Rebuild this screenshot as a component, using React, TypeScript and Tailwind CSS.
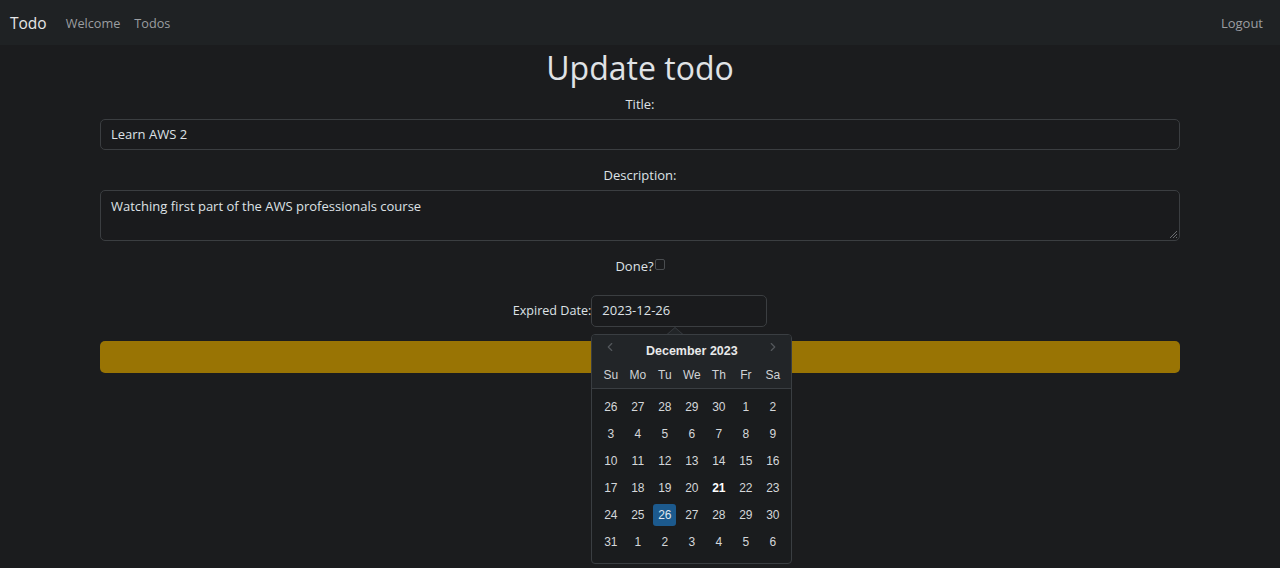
import { ChevronLeft, ChevronRight } from 'lucide-react';

const weekdays = ['Su', 'Mo', 'Tu', 'We', 'Th', 'Fr', 'Sa'];

const weeks = [
  [26, 27, 28, 29, 30, 1, 2],
  [3, 4, 5, 6, 7, 8, 9],
  [10, 11, 12, 13, 14, 15, 16],
  [17, 18, 19, 20, 21, 22, 23],
  [24, 25, 26, 27, 28, 29, 30],
  [31, 1, 2, 3, 4, 5, 6],
];

function DatePicker() {
  return (
    <div className="absolute left-0 top-[39px] z-10 w-[201px] font-['Liberation_Sans',Arial,sans-serif]">
      <div className="absolute left-[76px] top-[-7px] h-0 w-0 border-x-[8px] border-b-[7px] border-x-transparent border-b-[#3a3e42]" />
      <div className="absolute left-[77px] top-[-6px] h-0 w-0 border-x-[7px] border-b-[6px] border-x-transparent border-b-[#222528]" />
      <div className="overflow-hidden rounded-[4px] border border-[#3a3e42] bg-[#1a1c1e]">
        <div className="border-b border-[#3a3e42] bg-[#222528] px-[5px] pt-[4px] pb-[2px]">
          <div className="relative flex h-[25px] items-center justify-center">
            <ChevronLeft size={14} strokeWidth={2} className="absolute left-[6px] top-[1px] text-[#54585c]" />
            <span className="text-[12.5px] font-bold text-[#e8e9ea]">December 2023</span>
            <ChevronRight size={14} strokeWidth={2} className="absolute right-[6px] top-[1px] text-[#54585c]" />
          </div>
          <div className="grid grid-cols-7">
            {weekdays.map((d) => (
              <div key={d} className="flex h-[22px] items-center justify-center text-[12px] text-[#d0d3d6]">{d}</div>
            ))}
          </div>
        </div>
        <div className="px-[5px] pt-[4px] pb-[8px]">
          {weeks.map((w, i) => (
            <div key={i} className="grid grid-cols-7">
              {w.map((d, j) => {
                const selected = i === 4 && d === 26;
                const today = i === 3 && d === 21;
                return (
                  <div key={j} className="flex h-[27px] items-center justify-center">
                    <span className={`flex h-[22px] w-[23px] items-center justify-center rounded-[3px] text-[12px] ${selected ? 'bg-[#1c5a8e] text-[#dfe6ee]' : today ? 'font-bold text-white' : 'text-[#d4d7da]'}`}>
                      {d}
                    </span>
                  </div>
                );
              })}
            </div>
          ))}
        </div>
      </div>
    </div>
  );
}

export default function App() {
  return (
    <div className="min-h-[568px] bg-[#1b1c1e] font-['Open_Sans','Noto_Sans',sans-serif] text-[#dee2e6]">
      <nav className="flex h-[45px] items-center bg-[#1f2224] px-[10px] pt-[2px]">
        <a className="mr-[19px] text-[15.5px] text-[#e6e7e8]">Todo</a>
        <a className="mr-[14px] text-[12.7px] text-[#9b9ea1]">Welcome</a>
        <a className="text-[12.7px] text-[#9b9ea1]">Todos</a>
        <a className="ml-auto mr-[7px] text-[13px] text-[#9b9ea1]">Logout</a>
      </nav>

      <div className="mx-auto w-[1080px] text-center text-[13px]">
        <h1 className="mt-[1px] text-[32px] leading-[44px] text-[#e0e3e6]">Update todo</h1>

        <div className="mt-[4px] leading-[20px]">Title:</div>
        <div className="mt-[5px] flex h-[31px] items-center rounded-[5px] border border-[#3b3e41] bg-[#1a1b1d] px-[10px] text-left">
          Learn AWS 2
        </div>

        <div className="mt-[15px] leading-[20px]">Description:</div>
        <div className="relative mt-[5px] h-[51px] rounded-[5px] border border-[#3b3e41] bg-[#1a1b1d] px-[10px] pt-[6px] text-left">
          Watching first part of the AWS professionals course
          <svg className="absolute right-[1px] bottom-[1px]" width="10" height="10" viewBox="0 0 10 10">
            <path d="M9 2L2 9M9 5L5 9M9 8L8 9" stroke="#6a6d70" strokeWidth="1" />
          </svg>
        </div>

        <div className="mt-[15px] flex h-[20px] items-center justify-center leading-[20px]">
          <span>Done?</span>
          <span className="ml-[1px] mb-[3px] inline-block h-[11px] w-[10px] rounded-[2px] border border-[#4a4d50] bg-[#1a1b1d]" />
        </div>

        <div className="mt-[19px] flex items-center justify-center">
          <span className="text-[12.6px]">Expired Date:</span>
          <div className="relative">
            <div className="flex h-[32px] w-[176px] items-center rounded-[5px] border border-[#3b3e41] bg-[#1a1b1d] px-[10px] text-left">
              2023-12-26
            </div>
            <DatePicker />
          </div>
        </div>

        <div className="mt-[14px] h-[32px] rounded-[5px] bg-[#997404]" />
      </div>
    </div>
  );
}
